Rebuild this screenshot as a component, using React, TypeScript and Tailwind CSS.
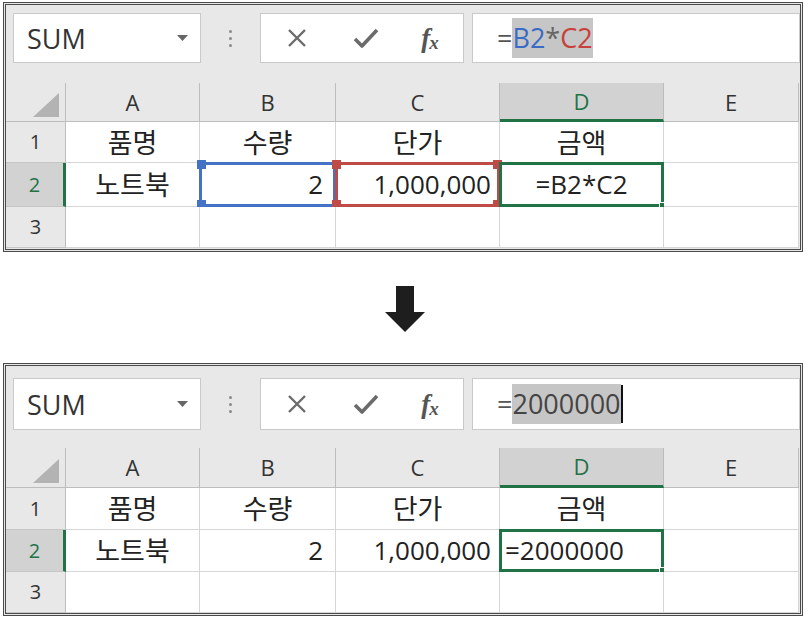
import React from 'react';

const LATIN = "font-['Open_Sans','Noto_Sans_CJK_KR',sans-serif]";
const KR = "font-['Noto_Sans_CJK_KR','Open_Sans',sans-serif] font-normal text-[27px]";

function XIcon() {
  return (
    <svg width="22" height="22" viewBox="0 0 22 22">
      <path d="M3 3 L19 19 M19 3 L3 19" stroke="#6b6b6b" strokeWidth="2.4" fill="none" />
    </svg>
  );
}

function CheckIcon() {
  return (
    <svg width="26" height="22" viewBox="0 0 26 22">
      <path d="M2 12 L9 19 L24 3" stroke="#6b6b6b" strokeWidth="3.6" fill="none" strokeLinejoin="round" />
    </svg>
  );
}

function Corner({ pos, color }: { pos: string; color: string }) {
  return <div className={`absolute w-[9px] h-[9px] ${pos} ${color}`} />;
}

function Panel({ after }: { after: boolean }) {
  const rowH = after ? ['h-[42px]', 'h-[42px]', 'h-[41px]'] : ['h-[41px]', 'h-[44px]', 'h-[41px]'];
  const cols = [
    { k: 'A', w: 'w-[134px]' },
    { k: 'B', w: 'w-[136px]' },
    { k: 'C', w: 'w-[164px]' },
    { k: 'D', w: 'w-[164px]' },
    { k: 'E', w: 'w-[135px]' },
  ];
  const cellBase = 'relative flex items-center border-r border-b border-[#d6d6d6] bg-white text-[26px] text-[#222]';

  return (
    <div className={`ml-[3px] w-[800px] border-[3px] border-double border-[#4a4a4a] bg-[#e8e8e8] ${after ? 'h-[253px]' : 'h-[250px]'}`}>
      {/* formula bar */}
      <div className={`flex items-stretch pl-[7px] ${after ? 'pt-[12px] h-[64px]' : 'pt-[8px] h-[58px]'}`}>
        <div className={`w-[188px] flex items-center justify-between bg-white border border-[#c9c9c9] pl-[13px] pr-[12px] ${LATIN}`}>
          <span className="text-[27px] text-[#333] leading-none">SUM</span>
          <svg width="11" height="7" viewBox="0 0 11 7"><path d="M0 0 H11 L5.5 6 Z" fill="#666" /></svg>
        </div>
        <div className="w-[59px] flex flex-col items-center justify-center gap-[4px]">
          <div className="w-[3px] h-[3px] rounded-full bg-[#8a8a8a]" />
          <div className="w-[3px] h-[3px] rounded-full bg-[#8a8a8a]" />
          <div className="w-[3px] h-[3px] rounded-full bg-[#8a8a8a]" />
        </div>
        <div className="w-[204px] flex items-center bg-white border border-[#c9c9c9]">
          <div className="w-[70px] flex justify-center pl-[2px]"><XIcon /></div>
          <div className="w-[70px] flex justify-center"><CheckIcon /></div>
          <div className="flex-1 flex items-end justify-center pr-[4px] font-['Liberation_Serif',serif] italic text-[#555] font-bold leading-none">
            <span className="text-[27px]">f</span><span className="text-[19px] -ml-[1px]">x</span>
          </div>
        </div>
        <div className={`flex-1 ml-[8px] flex items-center bg-white border border-[#c9c9c9] pl-[24px] text-[27px] ${LATIN}`}>
          <span className="text-[#555]">=</span>
          {after ? (
            <>
              <span className="bg-[#c6c6c6] text-[#444] leading-[40px]">2000000</span>
              <span className="w-[2px] h-[38px] bg-[#111]" />
            </>
          ) : (
            <span className="bg-[#c6c6c6] leading-[40px]">
              <span className="text-[#3a6cc6]">B2</span>
              <span className="text-[#666]">*</span>
              <span className="text-[#c8403a]">C2</span>
            </span>
          )}
        </div>
      </div>

      {/* grid */}
      <div className={after ? 'mt-[18px]' : 'mt-[20px]'}>
        <div className={`flex ${after ? 'h-[40px]' : 'h-[39px]'} ${LATIN}`}>
          <div className="w-[60px] relative border-r border-b border-[#bdbdbd]">
            <svg className="absolute right-[6px] bottom-[4px]" width="26" height="24" viewBox="0 0 26 24"><path d="M26 0 V24 H0 Z" fill="#b3b3b3" /></svg>
          </div>
          {cols.map(c => (
            <div
              key={c.k}
              className={`${c.w} flex items-center justify-center text-[22px] border-r border-[#bdbdbd] ${c.k === 'D' ? 'bg-[#d2d2d2] border-b-[3px] border-b-[#217346] text-[#217346]' : 'border-b border-b-[#bdbdbd] text-[#333]'}`}
            >
              {c.k}
            </div>
          ))}
        </div>

        {[0, 1, 2].map(r => (
          <div key={r} className={`flex ${rowH[r]}`}>
            <div className={`w-[60px] flex items-center justify-center text-[20px] border-b border-[#c6c6c6] ${LATIN} ${r === 1 ? 'bg-[#d2d2d2] border-r-[3px] border-r-[#217346] text-[#217346]' : 'border-r border-r-[#bdbdbd] text-[#333]'}`}>
              {r + 1}
            </div>
            {r === 0 && (
              <>
                <div className={`${cols[0].w} ${cellBase} justify-center ${KR}`}>품명</div>
                <div className={`${cols[1].w} ${cellBase} justify-center ${KR}`}>수량</div>
                <div className={`${cols[2].w} ${cellBase} justify-center ${KR}`}>단가</div>
                <div className={`${cols[3].w} ${cellBase} justify-center ${KR}`}>금액</div>
                <div className={`${cols[4].w} ${cellBase}`} />
              </>
            )}
            {r === 1 && (
              <>
                <div className={`${cols[0].w} ${cellBase} justify-center ${KR}`}>노트북</div>
                <div className={`${cols[1].w} ${cellBase} justify-end pr-[12px] ${LATIN} ${after ? '' : 'bg-[#dce5f3]'}`}>
                  2
                  {!after && (
                    <div className="absolute -left-[1px] -top-[1px] -right-[1px] -bottom-[1px] border-[3px] border-[#4472c4]">
                      <Corner pos="-left-[5px] -top-[5px]" color="bg-[#4472c4]" />
                      <Corner pos="-left-[5px] -bottom-[5px]" color="bg-[#4472c4]" />
                    </div>
                  )}
                </div>
                <div className={`${cols[2].w} ${cellBase} justify-end pr-[8px] ${LATIN} ${after ? '' : 'bg-[#f5e0e0]'}`}>
                  1,000,000
                  {!after && (
                    <div className="absolute -left-[1px] -top-[1px] -right-[1px] -bottom-[1px] border-[3px] border-[#bf4b47]">
                      <Corner pos="-left-[6px] -top-[5px]" color="bg-[#bf4b47]" />
                      <Corner pos="-left-[6px] -bottom-[5px]" color="bg-[#bf4b47]" />
                      <Corner pos="-right-[5px] -top-[5px]" color="bg-[#bf4b47]" />
                      <Corner pos="-right-[5px] -bottom-[5px]" color="bg-[#bf4b47]" />
                    </div>
                  )}
                </div>
                <div className={`${cols[3].w} ${cellBase} ${after ? 'justify-start pl-[5px]' : 'justify-center'} ${LATIN}`}>
                  {after ? '=2000000' : '=B2*C2'}
                  <div className="absolute -left-[1px] -top-[1px] -right-[1px] -bottom-[1px] border-[3px] border-[#217346]">
                    <div className="absolute -right-[5px] -bottom-[5px] w-[7px] h-[7px] bg-[#217346] border border-white" />
                  </div>
                </div>
                <div className={`${cols[4].w} ${cellBase}`} />
              </>
            )}
            {r === 2 && cols.map(c => <div key={c.k} className={`${c.w} ${cellBase}`} />)}
          </div>
        ))}
      </div>
    </div>
  );
}

export default function App() {
  return (
    <div className="w-[808px] h-[620px] bg-white overflow-hidden">
      <div className="pt-[2px]">
        <Panel after={false} />
      </div>
      <div className="h-[111px] flex justify-center pt-[34px] pl-[2px]">
        <svg width="40" height="47" viewBox="0 0 40 47">
          <path d="M11 0 H29 V26 H40 L20 46 L0 26 H11 Z" fill="#1e1e1e" />
        </svg>
      </div>
      <Panel after={true} />
    </div>
  );
}
